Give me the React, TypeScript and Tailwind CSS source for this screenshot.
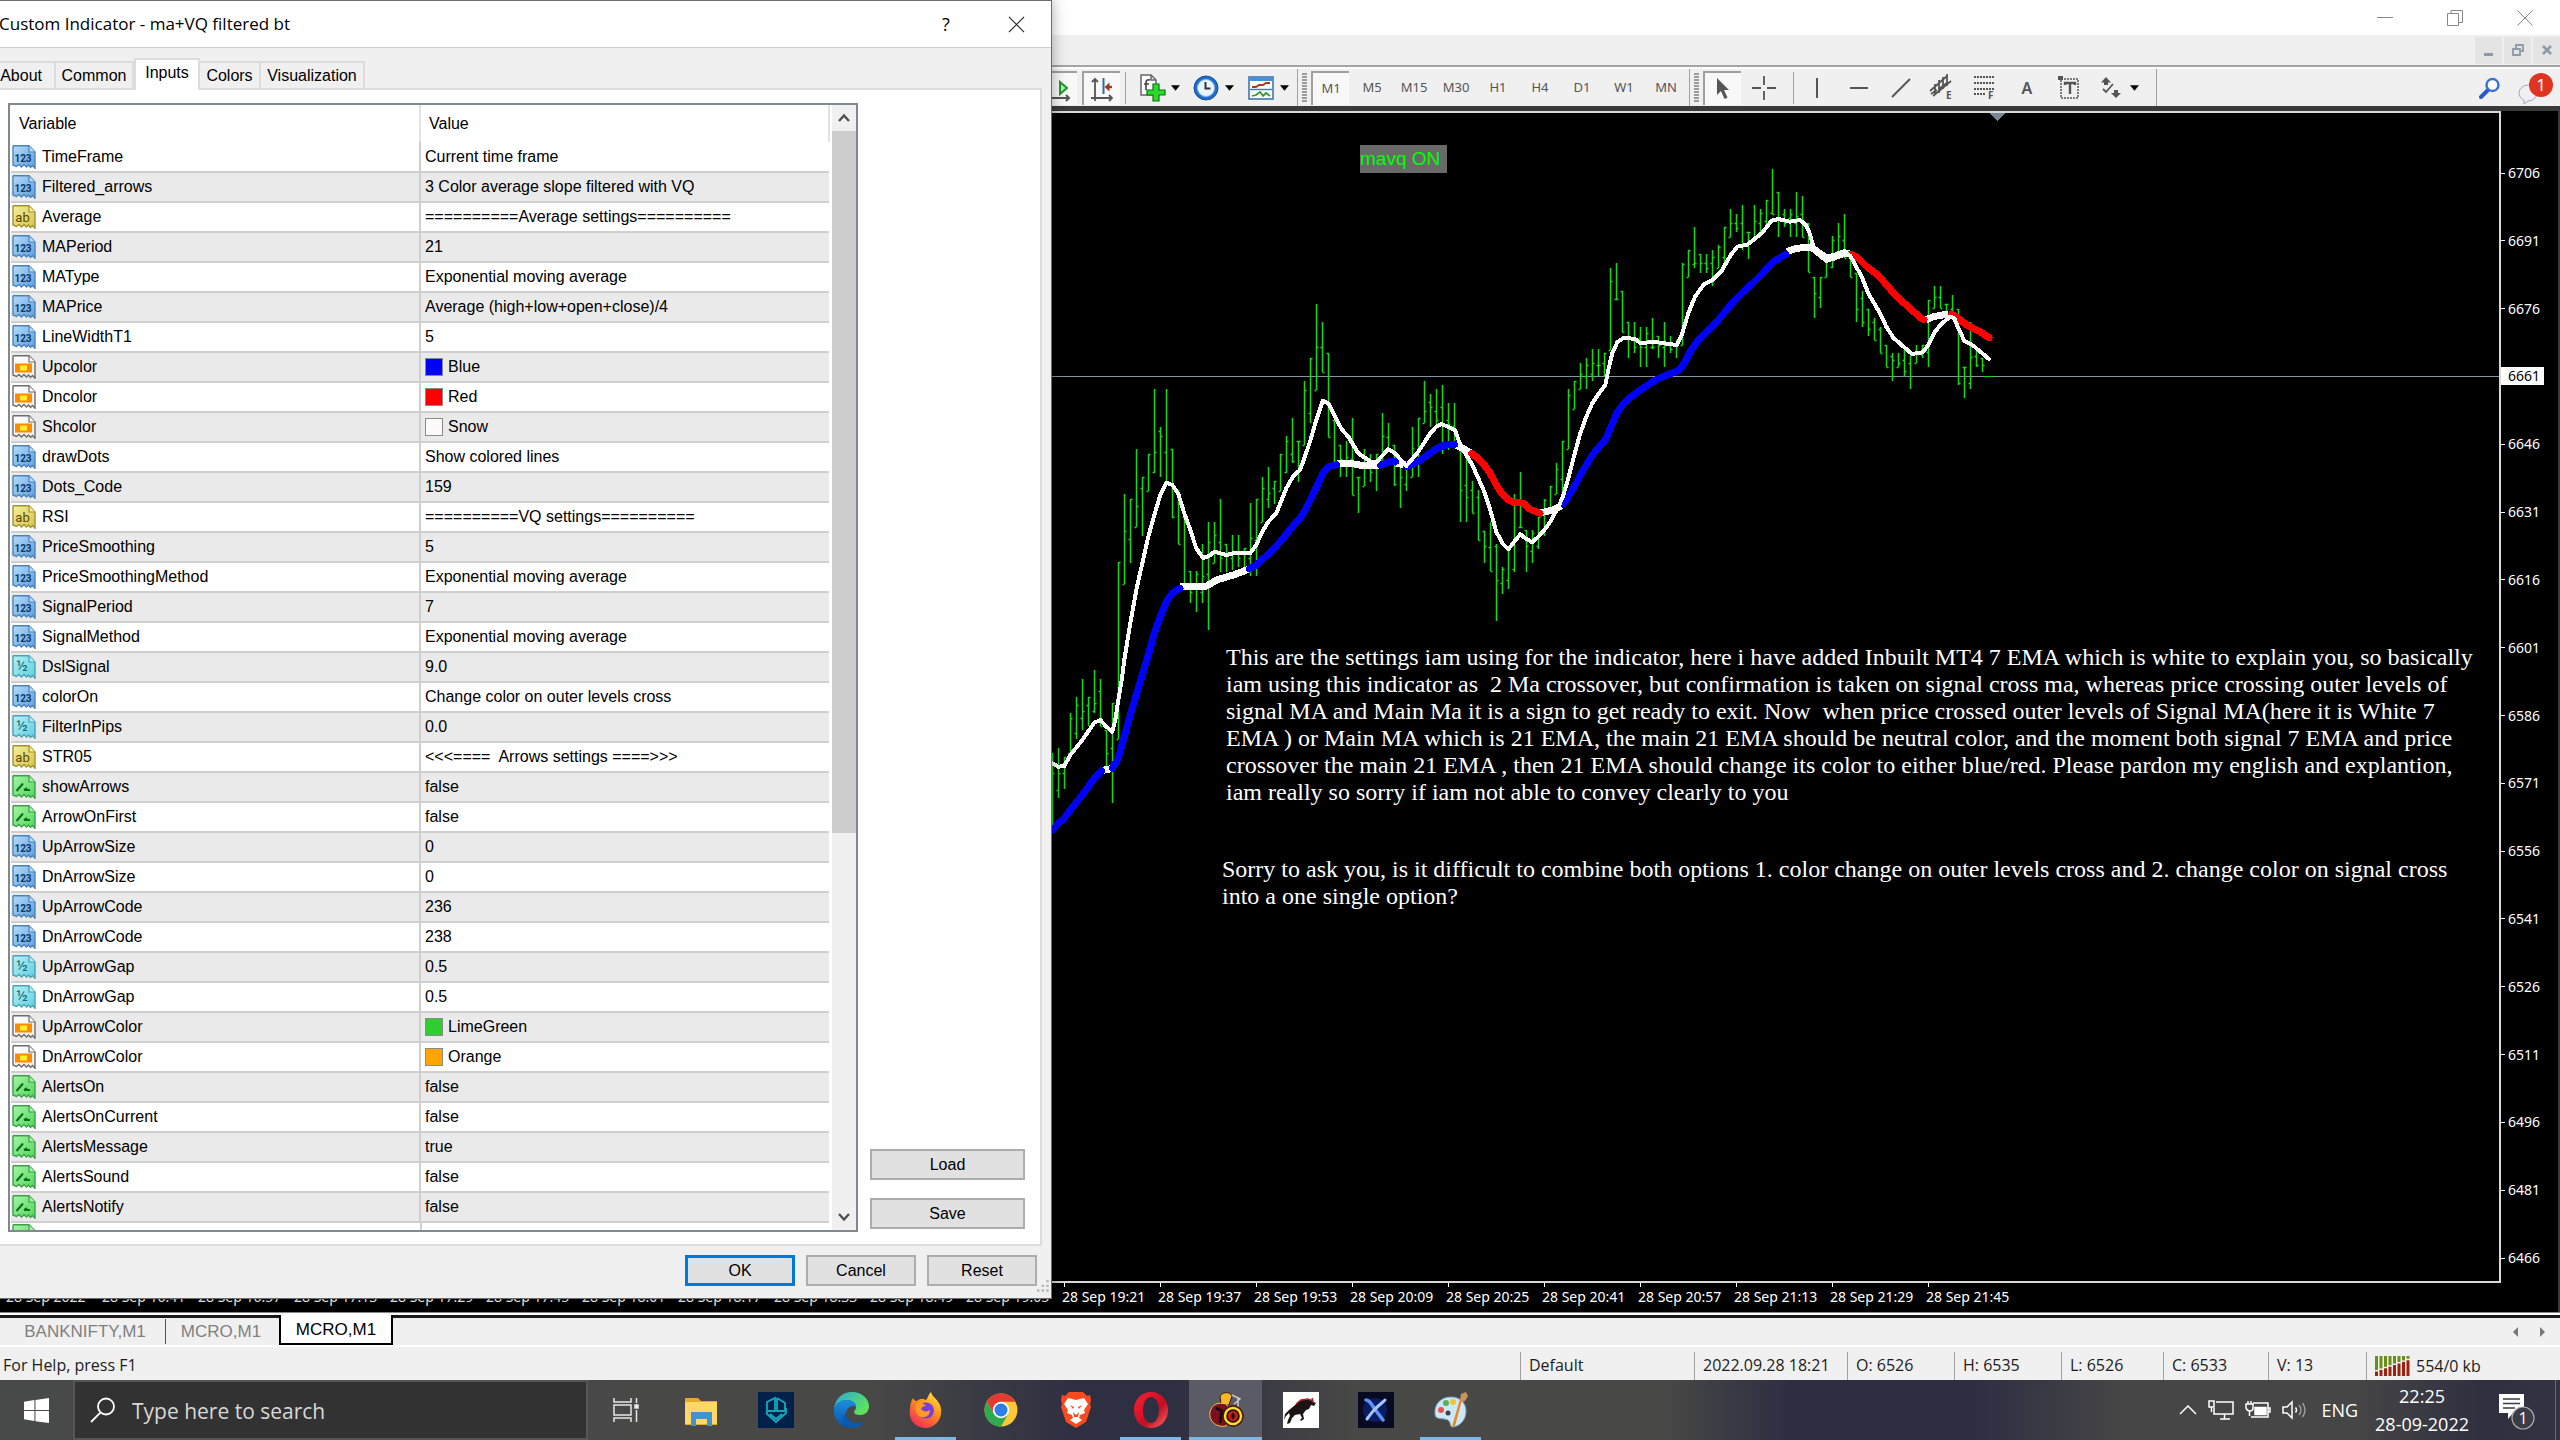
import React from "react";

/* ---------- chart data: y values in thirds of a pixel from each block's origin ---------- */

type Range = [number, number];
type Point = [number, number];

const EARLY_BARS: Range[] = [
  [1210, 1430], [1195, 1345], [1220, 1318], [1088, 1210], [1040, 1168], [987, 1140], [1040, 1128], [960, 1088],
  [987, 1128], [1140, 1250], [1060, 1358], [635, 1168], [433, 703], [447, 638], [298, 530], [380, 557],
  [312, 422], [118, 368], [232, 382], [118, 400], [298, 503], [420, 583], [500, 715], [663, 760],
  [663, 787], [583, 758], [515, 840], [515, 638], [447, 665], [583, 665], [556, 660], [556, 650],
  [595, 655], [460, 678], [447, 678], [380, 515], [352, 475], [393, 462], [312, 422], [258, 368],
  [204, 340], [272, 395], [92, 285], [24, 218], [-138, 119], [-85, 67], [9, 260], [210, 340],
  [285, 382], [272, 382], [204, 436], [380, 490], [298, 408], [312, 395], [312, 422], [190, 330],
  [218, 300], [285, 408], [330, 475], [340, 422], [232, 382], [204, 382], [92, 218], [132, 232],
  [118, 225], [105, 312], [158, 300], [158, 285], [290, 517], [320, 517], [393, 490], [420, 570],
  [543, 638], [515, 663], [583, 813],
];

const LATE_BARS: Range[] = [
  [1250, 1332], [1195, 1318], [1033, 1265], [967, 1130], [1140, 1265], [1140, 1238], [1100, 1197], [1047, 1157],
  [1007, 1090], [940, 1033], [872, 1040], [718, 898], [692, 778], [638, 718], [625, 718], [597, 692],
  [597, 678], [610, 680], [353, 600], [340, 448], [422, 545], [517, 625], [517, 610], [530, 652],
  [530, 652], [503, 597], [557, 625], [517, 652], [557, 610], [570, 625], [340, 585], [300, 382],
  [232, 355], [312, 368], [312, 368], [300, 408], [286, 355], [232, 350], [178, 260], [192, 247],
  [165, 300], [245, 328], [165, 270], [178, 245], [150, 230], [57, 192], [125, 260], [178, 232],
  [178, 260], [125, 260], [138, 260], [220, 367], [380, 503], [380, 475], [320, 382], [258, 355],
  [220, 320], [192, 325], [320, 380], [370, 517], [422, 530], [477, 557], [503, 570], [530, 610],
  [585, 652], [610, 692], [610, 650], [600, 678], [610, 718], [585, 638], [585, 625], [450, 652],
  [408, 475], [408, 475], [462, 490], [435, 490], [477, 705], [652, 745], [517, 718], [590, 652],
  [625, 665],
];

const early = (pts: Point[]): Point[] => pts.map(([x, y]) => [1050 + x / 3, 350 + y / 3]);
const late = (pts: Point[]): Point[] => pts.map(([x, y]) => [1500 + x / 3, 150 + y / 3]);

const BARS: Range[] = [
  ...EARLY_BARS.map(([h, l]): Range => [350 + h / 3, 350 + l / 3]),
  ...LATE_BARS.map(([h, l]): Range => [150 + h / 3, 150 + l / 3]),
];

const SIGNAL: Point[] = [
  ...early([
    [7, 1240], [25, 1250], [43, 1248], [61, 1215], [97, 1170], [133, 1118], [151, 1110], [169, 1130], [187, 1145],
    [196, 1110], [205, 1050], [215, 990], [223, 930], [241, 820], [259, 720], [277, 640], [295, 560], [313, 495],
    [331, 435], [349, 398], [367, 405], [385, 432], [403, 490], [421, 540], [439, 595], [459, 624], [477, 618],
    [493, 605], [529, 615], [550, 610], [601, 609], [619, 585], [637, 545], [655, 515], [679, 490], [709, 415],
    [730, 378], [750, 360], [763, 325], [781, 272], [799, 210], [818, 152], [835, 160], [853, 195], [875, 238],
    [895, 260], [925, 310], [962, 335], [980, 335], [1015, 298], [1033, 308], [1069, 348], [1105, 305], [1141, 250],
    [1159, 230], [1175, 222], [1215, 240], [1231, 285], [1249, 315], [1267, 345], [1285, 385], [1303, 425],
    [1321, 480], [1339, 545], [1357, 580],
  ]),
  ...late([
    [25, 1198], [43, 1175], [61, 1153], [79, 1167], [97, 1177], [115, 1160], [133, 1140], [151, 1115], [169, 1082],
    [187, 1045], [205, 985], [223, 915], [241, 850], [259, 800], [277, 760], [295, 733], [316, 705], [325, 660],
    [337, 610], [352, 577], [371, 563], [405, 567], [422, 580], [460, 575], [500, 581], [530, 585], [545, 555],
    [565, 490], [585, 440], [612, 403], [637, 390], [665, 362], [692, 315], [712, 290], [742, 284], [785, 250],
    [815, 212], [835, 207], [870, 215], [900, 210], [917, 225], [930, 252], [940, 290], [960, 305], [980, 318],
    [1000, 316], [1033, 303], [1051, 318], [1069, 350], [1087, 385], [1105, 430], [1140, 490], [1159, 530],
    [1180, 563], [1236, 612], [1268, 607], [1285, 585], [1303, 548], [1321, 525], [1350, 500], [1363, 505],
    [1375, 535], [1393, 572], [1420, 587], [1467, 627],
  ]),
];

const SNOW = "#fffafa";
const MAIN: { color: string; points: Point[] }[] = [
  { color: SNOW, points: early([[155, 1262], [187, 1255]]) },
  { color: SNOW, points: early([[390, 710], [466, 710], [500, 690], [550, 675], [598, 657]]) },
  { color: SNOW, points: early([[860, 340], [900, 340], [940, 347], [988, 346]]) },
  { color: SNOW, points: early([[1038, 340], [1066, 345]]) },
  { color: SNOW, points: early([[1219, 285], [1262, 308]]) },
  { color: SNOW, points: late([[122, 1088], [160, 1080], [184, 1068]]) },
  { color: SNOW, points: late([[862, 305], [885, 296], [915, 292], [938, 294], [960, 312], [980, 328], [1000, 322], [1033, 310], [1048, 312]]) },
  { color: SNOW, points: late([[1277, 510], [1300, 500], [1345, 492]]) },
  { color: "#0000ff", points: early([[7, 1440], [25, 1420], [43, 1405], [61, 1380], [97, 1335], [133, 1285], [155, 1262]]) },
  {
    color: "#0000ff",
    points: early([[187, 1255], [205, 1225], [223, 1160], [241, 1095], [259, 1035], [277, 975], [295, 915], [313, 850], [331, 800], [349, 755], [367, 730], [390, 715]]),
  },
  {
    color: "#0000ff",
    points: early([[598, 657], [619, 645], [655, 612], [691, 575], [727, 530], [750, 505], [763, 485], [781, 450], [799, 412], [820, 368], [835, 350], [860, 344]]),
  },
  { color: "#0000ff", points: early([[992, 346], [1015, 336], [1038, 334]]) },
  { color: "#0000ff", points: early([[1069, 348], [1090, 343], [1123, 322], [1159, 296], [1177, 287], [1217, 282]]) },
  {
    color: "#ff0000",
    points: early([[1265, 311], [1285, 325], [1303, 345], [1321, 370], [1339, 405], [1357, 432], [1375, 450], [1393, 458], [1403, 457], [1420, 460], [1440, 478], [1470, 490]]),
  },
  {
    color: "#0000ff",
    points: late([[190, 1062], [205, 1040], [223, 1010], [241, 975], [259, 945], [277, 915], [300, 888], [319, 865], [335, 825], [350, 790], [371, 760], [400, 735], [440, 707], [470, 688], [500, 675], [535, 662], [553, 640], [570, 605], [595, 570], [620, 545], [655, 510], [700, 455], [730, 425], [760, 398], [790, 368], [820, 335], [858, 313]]),
  },
  { color: "#ff0000", points: late([[1051, 313], [1075, 325], [1100, 350], [1130, 372], [1160, 405], [1190, 440], [1230, 475], [1260, 503], [1272, 509]]) },
  { color: "#ff0000", points: late([[1355, 492], [1375, 505], [1400, 525], [1440, 545], [1467, 563]]) },
];

const line = (pts: Point[]) => pts.map(([x, y]) => `${x.toFixed(1)},${y.toFixed(1)}`).join(" ");

const barPath = BARS.map(([h, l], i) => {
  const x = 1052.5 + i * 6;
  const prev = BARS[Math.max(0, i - 1)];
  const next = BARS[Math.min(BARS.length - 1, i + 1)];
  const clamp = (v: number) => Math.round(Math.min(l, Math.max(h, v))) + 0.5;
  const open = clamp((prev[0] + prev[1]) / 2);
  const close = clamp((next[0] + next[1]) / 2);
  return `M${x} ${h.toFixed(0)}V${l.toFixed(0)}M${x - 2} ${open}H${x}M${x} ${close}H${x + 2}`;
}).join("");

function Chart() {
  return (
    <svg className="absolute inset-0 h-full w-full" aria-label="MCRO,M1 price chart">
      <g transform="translate(0 -113)" fill="none" shapeRendering="crispEdges">
        <path d="M0 376.500H4000" stroke="#8595a4" />
        <path d={barPath} stroke="#10dd10" strokeWidth="1.500" shapeRendering="auto" />
        <path d="M1994 376.500h-10" stroke="#0ce00c" />
        {MAIN.map((s, i) => (
          <polyline
            key={i}
            points={line(s.points)}
            stroke={s.color}
            strokeWidth={7}
            strokeLinejoin="round"
            strokeLinecap={s.color === SNOW ? "butt" : "round"}
          />
        ))}
        <polyline points={line(SIGNAL)} stroke="#ffffff" strokeWidth={4} strokeLinejoin="round" strokeLinecap="round" />
        <path d="M1990 113h15l-7.500 8z" fill="#778899" />
      </g>
    </svg>
  );
}

/* ---------- indicator inputs ---------- */

type Kind = "int" | "str" | "dbl" | "bool" | "color";
type Input = { name: string; value: string; kind: Kind; swatch?: string };

const INPUTS: Input[] = [
  { name: "TimeFrame", value: "Current time frame", kind: "int" },
  { name: "Filtered_arrows", value: "3 Color average slope filtered with VQ", kind: "int" },
  { name: "Average", value: "==========Average settings==========", kind: "str" },
  { name: "MAPeriod", value: "21", kind: "int" },
  { name: "MAType", value: "Exponential moving average", kind: "int" },
  { name: "MAPrice", value: "Average (high+low+open+close)/4", kind: "int" },
  { name: "LineWidthT1", value: "5", kind: "int" },
  { name: "Upcolor", value: "Blue", kind: "color", swatch: "bg-[#0000ff]" },
  { name: "Dncolor", value: "Red", kind: "color", swatch: "bg-[#ff0000]" },
  { name: "Shcolor", value: "Snow", kind: "color", swatch: "bg-[#fffafa]" },
  { name: "drawDots", value: "Show colored lines", kind: "int" },
  { name: "Dots_Code", value: "159", kind: "int" },
  { name: "RSI", value: "==========VQ settings==========", kind: "str" },
  { name: "PriceSmoothing", value: "5", kind: "int" },
  { name: "PriceSmoothingMethod", value: "Exponential moving average", kind: "int" },
  { name: "SignalPeriod", value: "7", kind: "int" },
  { name: "SignalMethod", value: "Exponential moving average", kind: "int" },
  { name: "DslSignal", value: "9.0", kind: "dbl" },
  { name: "colorOn", value: "Change color on outer levels cross", kind: "int" },
  { name: "FilterInPips", value: "0.0", kind: "dbl" },
  { name: "STR05", value: "<<<====  Arrows settings ====>>>", kind: "str" },
  { name: "showArrows", value: "false", kind: "bool" },
  { name: "ArrowOnFirst", value: "false", kind: "bool" },
  { name: "UpArrowSize", value: "0", kind: "int" },
  { name: "DnArrowSize", value: "0", kind: "int" },
  { name: "UpArrowCode", value: "236", kind: "int" },
  { name: "DnArrowCode", value: "238", kind: "int" },
  { name: "UpArrowGap", value: "0.5", kind: "dbl" },
  { name: "DnArrowGap", value: "0.5", kind: "dbl" },
  { name: "UpArrowColor", value: "LimeGreen", kind: "color", swatch: "bg-[#32cd32]" },
  { name: "DnArrowColor", value: "Orange", kind: "color", swatch: "bg-[#ffa500]" },
  { name: "AlertsOn", value: "false", kind: "bool" },
  { name: "AlertsOnCurrent", value: "false", kind: "bool" },
  { name: "AlertsMessage", value: "true", kind: "bool" },
  { name: "AlertsSound", value: "false", kind: "bool" },
  { name: "AlertsNotify", value: "false", kind: "bool" },
];

const KIND_STYLE: Record<Kind, { light: string; dark: string; stroke: string }> = {
  int: { light: "#b4dbfb", dark: "#5f9fdc", stroke: "#4c84b8" },
  str: { light: "#f6ee9c", dark: "#d6c449", stroke: "#a2922f" },
  dbl: { light: "#b4f0f7", dark: "#5fcfde", stroke: "#47a3b3" },
  bool: { light: "#a5f5a5", dark: "#4fd65a", stroke: "#3c9f49" },
  color: { light: "#ffffff", dark: "#ececec", stroke: "#6d6d6d" },
};

function ParamIcon({ kind }: { kind: Kind }) {
  const s = KIND_STYLE[kind];
  const id = `param-${kind}`;
  return (
    <svg viewBox="0 0 24 24" className="size-6 shrink-0" aria-hidden="true">
      <defs>
        <linearGradient id={id} x1="0" y1="0" x2="1" y2="1">
          <stop offset="0" stopColor={s.light} />
          <stop offset="1" stopColor={s.dark} />
        </linearGradient>
      </defs>
      <path
        d="M1.500 .8H17L23 7V23.300L20.500 20.500L18.500 22.500L16.500 20L14.500 22L12 19.500L9.500 22L7 19.500L4.500 21.500L1 20V1.300Z"
        fill={`url(#${id})`}
        stroke={s.stroke}
        strokeWidth="1.400"
      />
      <path d="M17 1V7H23" fill={s.light} stroke={s.stroke} strokeWidth="1.200" />
      {kind === "int" && (
        <text x="11" y="16.500" fontSize="10" fontWeight="700" textAnchor="middle" fill="#0d3768" fontFamily="Roboto, sans-serif">123</text>
      )}
      {kind === "str" && (
        <text x="10.500" y="16.500" fontSize="13" textAnchor="middle" fill="#594a00" fontFamily="Roboto, sans-serif">ab</text>
      )}
      {kind === "dbl" && (
        <text x="10" y="16" fontSize="15" textAnchor="middle" fill="#0f6879" fontFamily="Roboto, sans-serif">½</text>
      )}
      {kind === "bool" && <path d="M4.500 16L11 8.500M12 15h6M12 15l3-2" stroke="#0c6b1b" strokeWidth="2" fill="none" />}
      {kind === "color" && (
        <>
          <rect x="3" y="8.500" width="17" height="9" fill="#ff8a00" />
          <rect x="8" y="10.500" width="7" height="5" fill="#ffee2b" />
        </>
      )}
    </svg>
  );
}

const DIALOG_TABS = [
  { label: "About", box: "w-[63px] pr-3 justify-end" },
  { label: "Common", box: "w-[78px] justify-center" },
  { label: "Inputs", box: "w-[66px] justify-center" },
  { label: "Colors", box: "w-[61px] justify-center" },
  { label: "Visualization", box: "w-[104px] justify-center" },
];

function Chevron({ up }: { up?: boolean }) {
  return (
    <svg viewBox="0 0 12 10" className="h-[10px] w-3" aria-hidden="true">
      <path d={up ? "M1 8L6 2.500L11 8" : "M1 2L6 7.500L11 2"} fill="none" stroke="#505050" strokeWidth="2.400" />
    </svg>
  );
}

function DialogButton({ label, wide, primary }: { label: string; wide?: boolean; primary?: boolean }) {
  return (
    <button
      type="button"
      className={
        "flex h-[31px] items-center justify-center bg-[#e1e1e1] text-base text-black " +
        (wide ? "w-[155px] " : "w-[110px] ") +
        (primary ? "border-3 border-[#0078d7]" : "border-2 border-[#adadad]")
      }
    >
      {label}
    </button>
  );
}

function IndicatorDialog() {
  return (
    <div
      role="dialog"
      aria-label="Custom Indicator - ma+VQ filtered bt"
      className="absolute top-0 -left-3 z-10 flex w-[1064px] flex-col border border-[#6c6c6c] bg-[#f0f0f0] font-['Liberation_Sans',Arial,sans-serif] text-base text-black shadow-[0_0_14px_rgba(0,0,0,0.35)]"
    >
      <div className="flex h-[47px] items-center border-b border-[#cfcfcf] bg-white pl-[10px] font-['Open_Sans',sans-serif] text-[17px]">
        <span className="flex-1">Custom Indicator - ma+VQ filtered bt</span>
        <button type="button" className="flex h-full w-[70px] items-center justify-center text-lg">?</button>
        <button type="button" aria-label="Close" className="flex h-full w-[70px] items-center justify-center">
          <svg viewBox="0 0 18 18" className="size-[17px]"><path d="M1 1L17 17M17 1L1 17" stroke="#222" strokeWidth="1.200" /></svg>
        </button>
      </div>

      <div role="tablist" className="flex h-10 items-end pl-1">
        {DIALOG_TABS.map((t) =>
          t.label === "Inputs" ? (
            <button key={t.label} role="tab" aria-selected="true" type="button" className={"relative z-10 -mb-[2px] flex h-8 items-center border-2 border-b-0 border-[#dcdcdc] bg-white pb-1 " + t.box}>
              {t.label}
            </button>
          ) : (
            <button key={t.label} role="tab" aria-selected="false" type="button" className={"flex h-[27px] items-center border-t-2 border-r-2 border-[#dcdcdc] bg-[#f0f0f0] " + t.box}>
              {t.label}
            </button>
          ),
        )}
      </div>

      <div className="mr-[9px] flex items-end gap-3 border-2 border-[#dcdcdc] bg-white pt-[13px] pr-[15px] pb-3 pl-[17px]">
        <div className="flex flex-1 border-2 border-[#828790] pl-px">
          <div className="flex-1">
            <table className="w-full table-fixed border-collapse">
              <colgroup>
                <col className="w-1/2" />
                <col className="w-1/2" />
              </colgroup>
              <thead>
                <tr className="h-[37px] text-left">
                  <th className="border-r-2 border-[#e2e2e2] pl-2 font-normal">Variable</th>
                  <th className="border-r-2 border-[#e2e2e2] pl-2 font-normal">Value</th>
                </tr>
              </thead>
              <tbody>
                {INPUTS.map((p) => (
                  <tr key={p.name} className="h-[30px] border-b-2 border-[#cfcfcf] even:bg-[#eaeaea]">
                    <td className="border-r-2 border-[#cfcfcf] p-0">
                      <div className="flex items-center gap-[6px] pl-px">
                        <ParamIcon kind={p.kind} />
                        {p.name}
                      </div>
                    </td>
                    <td className="p-0">
                      <div className="flex items-center gap-[5px] pl-1 whitespace-pre">
                        {p.swatch && <span className={"size-[18px] border border-[#8a8a8a] " + p.swatch} />}
                        {p.value}
                      </div>
                    </td>
                  </tr>
                ))}
              </tbody>
            </table>
            <div className="flex h-[7px] overflow-hidden">
              <div className="flex-1 border-r-2 border-[#cfcfcf] pt-px pl-px"><ParamIcon kind="bool" /></div>
              <div className="flex-1" />
            </div>
          </div>
          <div className="ml-[2px] flex w-6 flex-col items-center bg-[#f0f0f0]">
            <div className="flex h-[26px] items-center"><Chevron up /></div>
            <div className="h-[702px] w-full bg-[#cdcdcd]" />
            <div className="flex-1" />
            <div className="flex h-[26px] items-center"><Chevron /></div>
          </div>
        </div>
        <div className="mb-[3px] flex flex-col gap-[18px]">
          <DialogButton label="Load" wide />
          <DialogButton label="Save" wide />
        </div>
      </div>

      <div className="flex items-end justify-end pt-[9px] pb-3">
        <div className="flex gap-[11px]">
          <DialogButton label="OK" primary />
          <DialogButton label="Cancel" />
          <DialogButton label="Reset" />
        </div>
        <svg viewBox="0 0 12 12" className="-mb-2 size-[14px]" fill="#b5b5b5" aria-hidden="true">
          <path d="M8 0h2v2h-2zM8 4h2v2h-2zM4 4h2v2h-2zM8 8h2v2h-2zM4 8h2v2h-2zM0 8h2v2h-2z" />
        </svg>
      </div>
    </div>
  );
}

/* ---------- main window ---------- */

function Caret() {
  return <svg viewBox="0 0 10 6" className="h-[6px] w-[9px]" aria-hidden="true"><path d="M0 0H10L5 6Z" fill="#000" /></svg>;
}

function Grip() {
  return (
    <div className="mx-1 flex h-[30px] w-[5px] flex-col justify-between">
      {Array.from({ length: 10 }, (_, i) => <span key={i} className="h-[2px] bg-[#9b9b9b]" />)}
    </div>
  );
}

const PRESSED = "border-2 border-r-0 border-b-0 border-[#a0a0a0] bg-[#f8f8f8]";

function Tool({ label, pressed, children }: { label: string; pressed?: boolean; children: React.ReactNode }) {
  return (
    <button type="button" aria-label={label} className={"flex h-[34px] w-[38px] shrink-0 items-center justify-center " + (pressed ? PRESSED : "")}>
      {children}
    </button>
  );
}

const G = "#555555";

function Toolbar() {
  return (
    <div className="flex h-[39px] items-center border-t-2 border-white bg-[#f0f0f0] font-['Noto_Sans',sans-serif] text-[13px] text-[#555]">
      <div className="flex h-full flex-1 items-center">
        <div className="flex h-full w-[1298px] shrink-0 items-center justify-end border-r border-[#a0a0a0] pr-2">
          <div className="mr-[5px]">
            <Tool label="Auto scroll" pressed>
              <svg viewBox="0 0 24 26" className="h-[26px] w-6">
                <path d="M4 1v22M1 22h21M19 19l3 3-3 3" stroke={G} strokeWidth="2" fill="none" />
                <path d="M13 6l7 6-7 6z" fill="#b6e8b6" stroke="#1b9a2a" strokeWidth="2" />
              </svg>
            </Tool>
          </div>
          <Tool label="Chart shift" pressed>
            <svg viewBox="0 0 24 26" className="h-[26px] w-6">
              <path d="M5 3v22M1 22h21M2 6l3-3 3 3M19 19l3 3-3 3" stroke={G} strokeWidth="1.800" fill="none" />
              <path d="M13.500 2v16" stroke="#2d6da8" strokeWidth="2" />
              <path d="M22 11h-5" stroke="#a03a1b" strokeWidth="2.400" />
              <path d="M14.500 11l5-4.500v9z" fill="#a03a1b" />
            </svg>
          </Tool>
          <span className="mr-[13px] ml-[5px] h-8 w-px bg-[#a0a0a0]" />
          <button type="button" aria-label="Indicators" className="flex w-[54px] items-center gap-1">
            <svg viewBox="0 0 28 28" className="size-7">
              <path d="M2 1h10l5 5v15H2z" fill="#fff" stroke="#666" strokeWidth="1.500" />
              <path d="M12 1v5h5" fill="none" stroke="#666" strokeWidth="1.500" />
              <path d="M11 6c-3-1-4 1-4 3v7M5 10h5" fill="none" stroke="#444" strokeWidth="1.600" />
              <path d="M14 10h6v6h6v5h-6v6h-6v-6h-6v-5h6z" fill="#2fd82f" stroke="#067a06" strokeWidth="1.200" />
            </svg>
            <Caret />
          </button>
          <button type="button" aria-label="Periodicity" className="flex w-[55px] items-center gap-[6px]">
            <svg viewBox="0 0 26 26" className="size-[26px]">
              <circle cx="13" cy="13" r="12" fill="#1e6fd0" stroke="#164f96" />
              <circle cx="13" cy="13" r="8.500" fill="#eaf4fd" stroke="#8fc0ee" />
              <path d="M12.500 7v6.500h5" stroke="#333" strokeWidth="2" fill="none" />
            </svg>
            <Caret />
          </button>
          <button type="button" aria-label="Templates" className="flex w-[41px] items-center gap-[6px]">
            <svg viewBox="0 0 26 26" className="size-[26px]">
              <rect x="1" y="2" width="24" height="22" fill="#fff" stroke="#3c78b4" strokeWidth="1.600" />
              <rect x="1" y="2" width="24" height="4" fill="#4b8fd4" />
              <path d="M2 14.500h22" stroke="#3c78b4" strokeWidth="1.400" />
              <path d="M4 12h4l3-2h4l3-2h4" stroke="#b2361c" strokeWidth="1.800" fill="none" />
              <path d="M4 21l4-1 4-3 3 4 3-3 4 3" stroke="#2d9b2d" strokeWidth="1.800" fill="none" />
            </svg>
            <Caret />
          </button>
        </div>
        <Grip />
        <div className="flex h-full items-center gap-1 border-r border-[#a0a0a0] pr-1">
          {["M1", "M5", "M15", "M30", "H1", "H4", "D1", "W1", "MN"].map((t) => (
            <Tool key={t} label={t} pressed={t === "M1"}>{t}</Tool>
          ))}
        </div>
        <Grip />
        <div className="flex h-full items-center gap-1 border-r border-[#a0a0a0] pr-[10px]">
          <Tool label="Cursor" pressed>
            <svg viewBox="0 0 14 24" className="h-6 w-[14px]"><path d="M1 1V18L5 14L8.500 22L11.500 20.500L8 13H13Z" fill={G} /></svg>
          </Tool>
          <Tool label="Crosshair">
            <svg viewBox="0 0 24 24" className="size-6"><path d="M12 0v9M12 15v9M0 12h9M15 12h9" stroke={G} strokeWidth="1.800" /></svg>
          </Tool>
          <span className="ml-[6px] h-8 w-px bg-[#a0a0a0]" />
          <Tool label="Vertical line"><svg viewBox="0 0 20 20" className="size-5"><path d="M10 0v20" stroke={G} strokeWidth="2" /></svg></Tool>
          <Tool label="Horizontal line"><svg viewBox="0 0 20 20" className="size-5"><path d="M1 10h18" stroke={G} strokeWidth="2" /></svg></Tool>
          <Tool label="Trendline"><svg viewBox="0 0 20 20" className="size-5"><path d="M1 19L19 1" stroke={G} strokeWidth="2" /></svg></Tool>
          <Tool label="Equidistant channel">
            <svg viewBox="0 0 28 28" className="size-7">
              <path d="M1 17L18 2M4 22L22 7M6 10v10M10 6v13M14 3v12M18 0v12M2 20l6-4M10 15l9-7" stroke={G} strokeWidth="1.800" fill="none" />
              <text x="17" y="25" fontSize="10" fontWeight="700" fill={G}>E</text>
            </svg>
          </Tool>
          <Tool label="Fibonacci retracement">
            <svg viewBox="0 0 28 28" className="size-7">
              <path d="M3 3h21M3 9h21M3 15h21M3 20h12" stroke={G} strokeWidth="2" strokeDasharray="2 1" fill="none" />
              <text x="17" y="25" fontSize="10" fontWeight="700" fill={G}>F</text>
            </svg>
          </Tool>
          <Tool label="Text"><span className="text-base font-semibold">A</span></Tool>
          <Tool label="Text label">
            <svg viewBox="0 0 22 24" className="h-6 w-[22px]">
              <rect x="3" y="3" width="17" height="19" fill="none" stroke={G} strokeWidth="1.500" strokeDasharray="2 1" />
              <rect x="0" y="0" width="5" height="4" fill={G} />
              <path d="M7 9V7h10v2M12 7v11" stroke={G} strokeWidth="2.400" fill="none" />
            </svg>
          </Tool>
          <button type="button" aria-label="Arrows" className="ml-2 flex w-[46px] items-center gap-2">
            <svg viewBox="0 0 22 22" className="size-[22px]">
              <path d="M6 0l5 5.500H8V8H4V5.500H1ZM16 21l-5-5h3v-3h4v3h3Z" fill={G} />
              <path d="M3 12l3 3 7-8" stroke={G} strokeWidth="1.800" fill="none" />
            </svg>
            <Caret />
          </button>
        </div>
      </div>
      <button type="button" aria-label="Search" className="mr-1 flex w-11 items-center justify-center">
        <svg viewBox="0 0 22 22" className="size-[22px]">
          <path d="M2 20l7-7" stroke="#2a5cc4" strokeWidth="4" strokeLinecap="round" />
          <circle cx="13.500" cy="8" r="6" fill="#fff" stroke="#3970d8" strokeWidth="2.400" />
        </svg>
      </button>
      <button type="button" aria-label="Notifications" className="mr-[6px] flex items-center">
        <svg viewBox="0 0 38 34" className="h-[34px] w-[38px]">
          <path d="M3 22a9 8 0 1 1 9 8l-4 3v-4a9 8 0 0 1-5-7z" fill="#f0f0f4" stroke="#a6a6b4" />
          <circle cx="25" cy="14" r="12" fill="#df3420" />
          <text x="25" y="20" fontSize="17" textAnchor="middle" fill="#fff">1</text>
        </svg>
      </button>
    </div>
  );
}

const PRICES = [6706, 6691, 6676, 6661, 6646, 6631, 6616, 6601, 6586, 6571, 6556, 6541, 6526, 6511, 6496, 6481, 6466];
const TIMES = [
  "2022", "16:41", "16:57", "17:13", "17:29", "17:45", "18:01", "18:17", "18:33", "18:49", "19:05",
  "19:21", "19:37", "19:53", "20:09", "20:25", "20:41", "20:57", "21:13", "21:29", "21:45",
];

const NOTE_ONE = [
  "This are the settings iam using for the indicator, here i have added Inbuilt MT4 7 EMA which is white to explain you, so basically",
  "iam using this indicator as  2 Ma crossover, but confirmation is taken on signal cross ma, whereas price crossing outer levels of",
  "signal MA and Main Ma it is a sign to get ready to exit. Now  when price crossed outer levels of Signal MA(here it is White 7",
  "EMA ) or Main MA which is 21 EMA, the main 21 EMA should be neutral color, and the moment both signal 7 EMA and price",
  "crossover the main 21 EMA , then 21 EMA should change its color to either blue/red. Please pardon my english and explantion,",
  "iam really so sorry if iam not able to convey clearly to you",
];
const NOTE_TWO = [
  "Sorry to ask you, is it difficult to combine both options 1. color change on outer levels cross and 2. change color on signal cross",
  "into a one single option?",
];

function ChartWindow() {
  return (
    <div className="flex min-h-0 flex-1 flex-col border-t-[5px] border-r-2 border-[#3a3a3a] bg-black font-['Noto_Sans',sans-serif] text-sm text-white">
      <div className="flex min-h-0 flex-1">
        <div className="relative flex-1 overflow-hidden border-t-2 border-r-2 border-b-2 border-[#d8d8d8]">
          <Chart />
          <button type="button" className="absolute top-8 left-[1360px] h-7 w-[87px] bg-[#696969] text-left font-['Liberation_Sans',sans-serif] text-[19px] text-[#00ff00]">
            mavq ON
          </button>
          <div className="absolute top-[531px] left-[1222px] font-['Liberation_Serif','Times_New_Roman',serif] text-2xl leading-[27px] whitespace-pre">
            <div className="pl-1">{NOTE_ONE.map((l) => <p key={l} className="leading-[27px]">{l}</p>)}</div>
            <div className="pt-[50px]">{NOTE_TWO.map((l) => <p key={l} className="leading-[27px]">{l}</p>)}</div>
          </div>
        </div>
        <div className="flex w-[57px] flex-col justify-between pt-[52px] pb-[15px] leading-5">
          {PRICES.map((p) => (
            <div key={p} className="flex h-5 items-center">
              <span className="h-px w-1 bg-white" />
              {p === 6661 ? <span className="-ml-1 h-[18px] bg-white pr-1 pl-[7px] leading-[18px] text-black">{p}</span> : <span className="pl-[3px]">{p}</span>}
            </div>
          ))}
        </div>
      </div>
      <div className="flex h-[29px] shrink-0">
        {TIMES.map((t) => (
          <div key={t} className="flex w-24 shrink-0 flex-col pl-[6px] whitespace-nowrap">
            <span className="ml-[2px] h-1 w-px bg-white" />
            <span className="leading-5">28 Sep {t}</span>
          </div>
        ))}
      </div>
    </div>
  );
}

function SheetTabs() {
  return (
    <div className="flex h-8 items-start border-t-3 border-b-2 border-t-[#1a1a1a] border-b-white bg-[#f0f0f0] font-['Liberation_Sans',sans-serif] text-[17px] text-[#808080]">
      <div role="tablist" className="flex flex-1 items-start">
        <button role="tab" aria-selected="false" type="button" className="mt-px h-[25px] w-[166px] border-r border-[#555] pl-[5px] leading-[25px]">BANKNIFTY,M1</button>
        <button role="tab" aria-selected="false" type="button" className="mt-px h-[25px] w-[113px] pr-[3px] leading-[25px]">MCRO,M1</button>
        <button role="tab" aria-selected="true" type="button" className="-mt-[3px] h-[30px] w-[114px] border-2 border-t-0 border-black bg-white pt-[2px] text-black">MCRO,M1</button>
      </div>
      <div className="flex h-full items-center gap-[22px] pr-[14px]">
        <button type="button" aria-label="Scroll left"><svg viewBox="0 0 6 10" className="h-[10px] w-[6px]"><path d="M6 0v10L1 5z" fill="#777" /></svg></button>
        <button type="button" aria-label="Scroll right"><svg viewBox="0 0 6 10" className="h-[10px] w-[6px]"><path d="M0 0v10l5-5z" fill="#777" /></svg></button>
      </div>
    </div>
  );
}

const STATUS = [
  { text: "Default", w: "w-[174px]" },
  { text: "2022.09.28 18:21", w: "w-[153px]" },
  { text: "O: 6526", w: "w-[107px]" },
  { text: "H: 6535", w: "w-[107px]" },
  { text: "L: 6526", w: "w-[102px]" },
  { text: "C: 6533", w: "w-[105px]" },
  { text: "V: 13", w: "w-[98px]" },
];

function StatusBar() {
  return (
    <div className="flex h-[33px] items-end bg-[#f0f0f0] font-['Open_Sans',sans-serif] text-base text-[#1c1c1c]">
      <span className="h-[28px] flex-1 pl-[3px] leading-[27px]">For Help, press F1</span>
      {STATUS.map((s) => (
        <span key={s.text} className={"h-[28px] border-l border-[#a0a0a0] pl-2 leading-[27px] whitespace-nowrap " + s.w}>{s.text}</span>
      ))}
      <span className="flex h-[28px] w-[194px] items-center gap-[6px] border-l border-[#a0a0a0] pl-2">
        <svg viewBox="0 0 35 20" className="h-5 w-[35px]" aria-hidden="true">
          {Array.from({ length: 8 }, (_, i) => (
            <g key={i}>
              <rect x={i * 4.5} y="0" width="3" height={14 - i * 1.6} fill="#6b8e1a" />
              <rect x={i * 4.5} y={15.5 - i * 1.6} width="3" height={4.5 + i * 1.6} fill="#9b2210" />
            </g>
          ))}
        </svg>
        <span>554/0 kb</span>
      </span>
    </div>
  );
}

/* ---------- taskbar ---------- */

const APPS: { name: string; state?: "open" | "active"; icon: React.ReactNode }[] = [
  {
    name: "File Explorer",
    icon: (
      <>
        <path d="M2 6h13l3 3h16v24H2z" fill="#e9a924" />
        <path d="M2 10h32v22H2z" fill="#ffd869" />
        <path d="M8 20h21v14h-5v-7H13v7H8z" fill="#3f94d6" />
      </>
    ),
  },
  {
    name: "PG",
    icon: (
      <>
        <rect width="36" height="36" fill="#02214a" />
        <path d="M9 21V10l8-4v13H9M19 6l8 5v8h-8V6M8 21l10 9 10-9v-5M12 22l6 5 6-5" fill="none" stroke="#16a7b8" strokeWidth="1.800" />
      </>
    ),
  },
  {
    name: "Microsoft Edge",
    icon: (
      <>
        <defs>
          <linearGradient id="edge-a" x1="0" y1="0" x2="1" y2="0.600"><stop offset="0" stopColor="#2aa9e0" /><stop offset="1" stopColor="#5fe35a" /></linearGradient>
          <linearGradient id="edge-b" x1="0" y1="0" x2="0" y2="1"><stop offset="0" stopColor="#1b8fe0" /><stop offset="1" stopColor="#0a4fa8" /></linearGradient>
        </defs>
        <path d="M1 17C2 7 9 0 19 0c10 0 17 7 17 14 0 6-4 9-9 9-4 0-6-1-6-3 0-1 2-2 2-5 0-4-4-7-9-7C8 8 3 11 1 17z" fill="url(#edge-a)" />
        <path d="M1 17c2-6 7-9 13-9 5 0 9 3 9 7-2-2-9-1-10 6-1 8 8 13 18 9-3 4-8 6-13 6C8 36 0 28 1 17z" fill="url(#edge-b)" />
        <path d="M13 21c1 8 9 12 18 9-4 5-9 6-13 6-9-3-10-12-5-15z" fill="#0b5aa9" />
      </>
    ),
  },
  {
    name: "Firefox",
    state: "open",
    icon: (
      <>
        <defs>
          <linearGradient id="fox" x1="0.800" y1="0" x2="0.200" y2="1"><stop offset="0" stopColor="#ffe53b" /><stop offset="0.450" stopColor="#ff8a1f" /><stop offset="1" stopColor="#f0265e" /></linearGradient>
        </defs>
        <path d="M5 6c1 2 2 3 4 3 3-3 7-2 9-1 2-2 2-5 5-8 1 5 6 6 9 13 4 10-2 22-14 23C7 36 0 27 2 17c0-4 1-8 3-11z" fill="url(#fox)" />
        <circle cx="18" cy="18.500" r="8" fill="#7b3fd8" />
        <path d="M8 12c4-2 8-1 10 2-3 0-4 1-5 3 2 3 7 3 9 1 0 5-4 8-8 7-5-1-8-7-6-13z" fill="#ff9a28" />
      </>
    ),
  },
  {
    name: "Google Chrome",
    icon: (
      <>
        <circle cx="18" cy="18" r="16.500" fill="#fcc934" />
        <path d="M3.700 9.800A16.500 16.500 0 0 1 32.300 9.800H18L10.900 22.100Z" fill="#e33b2e" />
        <path d="M3.700 9.800A16.500 16.500 0 0 0 18 34.500L25.100 22.100L18 26L10.900 22.100Z" fill="#2da94f" />
        <circle cx="18" cy="18" r="8.200" fill="#fff" />
        <circle cx="18" cy="18" r="6.500" fill="#2f7de9" />
      </>
    ),
  },
  {
    name: "Brave",
    icon: (
      <>
        <path d="M11 0h14l4 4 3-1 1 5-1 4 1 3-5 15-10 6-10-6L3 15l1-3-1-4 1-5 3 1z" fill="#fb4a1d" />
        <path d="M10 6l8 2 8-2 4 6-4 6 1 3-5 2-1 3 3 2-6 4-6-4 3-2-1-3-5-2 1-3-4-6z" fill="#fff" />
        <path d="M12 13l4 2-1 2zM24 13l-4 2 1 2zM15 20l3 3 3-3-1 5h-4z" fill="#fb4a1d" />
      </>
    ),
  },
  {
    name: "Opera",
    state: "open",
    icon: (
      <>
        <defs><linearGradient id="opera" x1="0" y1="0" x2="1" y2="1"><stop offset="0" stopColor="#ff1f35" /><stop offset="0.600" stopColor="#c40d24" /><stop offset="1" stopColor="#ff6a6a" /></linearGradient></defs>
        <path fillRule="evenodd" d="M18 0C8 0 1 8 1 18s7 18 17 18 17-8 17-18S28 0 18 0zM18 5c5 0 8 6 8 13s-3 13-8 13-8-6-8-13 3-13 8-13z" fill="url(#opera)" />
      </>
    ),
  },
  {
    name: "MetaTrader",
    state: "active",
    icon: (
      <>
        <path d="M12 4c4-5 10-4 12 0l-3 9h-8z" fill="#f3b824" stroke="#3a1a08" />
        <path d="M24 3l8 4-6 5M30 5v12" fill="none" stroke="#c8c8c8" strokeWidth="1.500" />
        <path d="M2 20c2-8 8-10 16-8l6 8-6 14c-8 2-18-4-16-14z" fill="#7a1021" stroke="#f3c04a" />
        <path d="M8 16l6 3-2 12" fill="none" stroke="#1b0b0b" strokeWidth="3" />
        <circle cx="25" cy="24" r="10" fill="#f9dc2c" stroke="#4a1508" strokeWidth="1.500" />
        <circle cx="25" cy="24" r="6" fill="#c31a1a" stroke="#1a0a0a" strokeWidth="1.500" />
        <path d="M25 20l2 4-2 4-2-4z" fill="#111" />
      </>
    ),
  },
  {
    name: "Bull",
    icon: (
      <>
        <rect width="36" height="36" fill="#fff" />
        <path d="M33 11l-2 3-3-1-2 4-3 1-3 4 1 5-3 2-1-1 2-2-2-4-5 1-3 3-2 5-3 1 1-4 2-4-1-3-3 3-2 4 1-6 4-4 5-4 5-5 7-2 5 1 2 2z" fill="#1c1414" />
        <path d="M13 12l5-4 7-1 5 2-1-3" fill="none" stroke="#b3202a" strokeWidth="1.400" />
      </>
    ),
  },
  {
    name: "X",
    icon: (
      <>
        <rect width="36" height="36" fill="#070a20" />
        <circle cx="17" cy="18" r="12" fill="#0c1c63" />
        <path d="M8 8c3 0 5 3 8 8l9 12" fill="none" stroke="#5b93ff" strokeWidth="3.500" strokeLinecap="round" />
        <path d="M27 8c-3 3-7 6-10 9s-5 6-8 10" fill="none" stroke="#a5c8ff" strokeWidth="3" strokeLinecap="round" />
      </>
    ),
  },
  {
    name: "Paint",
    state: "open",
    icon: (
      <>
        <path d="M2 22C1 12 8 5 18 5c9 0 15 6 15 14 0 9-6 15-13 16-3 0-2-3-4-6-3-4-14 0-14-7z" fill="#cfe6f5" stroke="#7aa7c4" />
        <circle cx="8" cy="18" r="3" fill="#e5564a" />
        <circle cx="13" cy="11" r="3" fill="#58b05b" />
        <circle cx="20" cy="10" r="3" fill="#f1c33a" />
        <circle cx="15" cy="21" r="2.500" fill="#37434d" />
        <path d="M29 8l-7 26-3 1 1-4 7-24z" fill="#e08a2b" />
        <path d="M27 8l1-6 5-2 2 4-3 5-3 1z" fill="#c99558" />
      </>
    ),
  },
];

function Taskbar() {
  return (
    <div className="flex h-[60px] items-stretch bg-[linear-gradient(90deg,#484a4a_0%,#484847_34%,#2f2f42_42%,#2f2f42_46%,#484846_53%,#484846_65%,#2d2e42_70%,#2d2e42_77%,#464646_83%,#464646_92%,#2f2f40_97%,#333343_100%)] font-['Open_Sans',sans-serif] text-lg text-white">
      <button type="button" aria-label="Start" className="flex w-[73px] items-center justify-center">
        <svg viewBox="0 0 24 24" className="size-[25px]" fill="#fff"><path d="M0 3.500L10 2v9.500H0zM11 1.800L24 0v11.500H11zM0 12.500h10V22L0 20.500zM11 12.500h13V24L11 22.200z" /></svg>
      </button>
      <label className="flex w-[515px] items-center gap-4 border-2 border-[#565656] bg-[#323232] pl-[15px]">
        <svg viewBox="0 0 26 26" className="size-[26px] shrink-0"><circle cx="16" cy="9.500" r="8" fill="none" stroke="#fff" strokeWidth="1.800" /><path d="M10.500 15.500L1 25" stroke="#fff" strokeWidth="1.800" /></svg>
        <input aria-label="Search" placeholder="Type here to search" className="w-full bg-transparent pt-[3px] text-[21px] placeholder-[#d8d8d8] outline-none" />
      </label>
      <button type="button" aria-label="Task View" className="flex w-[76px] items-center justify-center">
        <svg viewBox="0 0 26 24" className="h-6 w-[26px]" fill="none" stroke="#e6e6e6" strokeWidth="1.500">
          <path d="M1 0v4h17V0M1 24v-4h17v4M1 7h17v10H1zM23.500 0v5M23.500 12v12" />
          <path d="M22 7h3v3h-3z" fill="#fff" />
        </svg>
      </button>
      <div className="flex flex-1 gap-[2px]">
        {APPS.map((a) => (
          <button
            key={a.name}
            type="button"
            aria-label={a.name}
            className={"flex w-[73px] flex-col items-center justify-between pt-3 " + (a.state === "active" ? "bg-[#5b5b66]" : "")}
          >
            <svg viewBox="0 0 36 36" className="size-9">{a.icon}</svg>
            <span className={"h-[3px] " + (a.state === "active" ? "w-full bg-[#76b9ed]" : a.state === "open" ? "w-[61px] bg-[#76b9ed]" : "w-0")} />
          </button>
        ))}
      </div>
      <div className="flex items-center gap-[11px] pr-1">
        <svg viewBox="0 0 18 10" className="h-[10px] w-[18px]"><path d="M1 9l8-8 8 8" fill="none" stroke="#fff" strokeWidth="1.500" /></svg>
        <svg viewBox="0 0 26 20" className="h-5 w-[26px]" fill="none" stroke="#fff" strokeWidth="1.500"><path d="M8 2h17v12H6V8M1 1h5v6H1zM3.500 7v5M12 19h10M16.500 14v5" /></svg>
        <svg viewBox="0 0 26 20" className="h-5 w-[26px]" fill="none" stroke="#fff" strokeWidth="1.500"><path d="M8 3h15v14H6M23 8h2v4h-2M1 4h7v4q0 3-3 3t-4-3zM3 1v3M6 1v3M4.500 11v5" /><path d="M10 7.500h11v7H10z" fill="#fff" /></svg>
        <svg viewBox="0 0 24 20" className="h-5 w-6" fill="none" stroke="#fff" strokeWidth="1.500"><path d="M1 7h4l5-5v16l-5-5H1zM13.500 7.500q2 2.500 0 5" /><path d="M17 5q4 5 0 10M20.500 3q5 7 0 14" stroke="#9a9a9a" /></svg>
        <span className="pl-1">ENG</span>
        <div className="ml-[6px] flex flex-col text-center leading-7">
          <span>22:25</span>
          <span>28-09-2022</span>
        </div>
        <svg viewBox="0 0 38 42" className="mr-2 ml-[18px] h-[42px] w-[38px]" aria-label="Notifications">
          <path d="M1 5h25v19H15l-5 6v-6H1z" fill="#fff" />
          <path d="M5 10h17M5 14.500h17M5 19h12" stroke="#3a3a44" strokeWidth="1.500" />
          <circle cx="25" cy="29" r="11" fill="#3c3c47" stroke="#aaa" strokeWidth="1.200" />
          <text x="25" y="35" fontSize="16" textAnchor="middle" fill="#fff">1</text>
        </svg>
        <span className="h-full w-px bg-[#6b6b75]" />
      </div>
    </div>
  );
}

export default function App() {
  return (
    <div className="relative flex h-screen flex-col overflow-hidden bg-white">
      <div className="flex h-[35px] items-center justify-end bg-white">
        <button type="button" aria-label="Minimize" className="flex h-full w-[70px] items-center justify-center"><span className="h-px w-4 bg-[#888]" /></button>
        <button type="button" aria-label="Restore" className="flex h-full w-[70px] items-center justify-center">
          <svg viewBox="0 0 16 16" className="size-4"><path d="M.5 3.500h11v12H.5zM4 3.500v-3h11.500v12H12" fill="none" stroke="#888" /></svg>
        </button>
        <button type="button" aria-label="Close" className="flex h-full w-[70px] items-center justify-center">
          <svg viewBox="0 0 16 16" className="size-4"><path d="M.5.5l15 15M15.500.5l-15 15" stroke="#888" /></svg>
        </button>
      </div>
      <div className="flex h-[32px] items-center justify-end gap-[2px] border-b-2 border-[#a5a5a5] bg-[#f0f0f0]">
        <button type="button" aria-label="Minimize chart" className="flex h-[27px] w-[27px] items-center justify-center bg-[#e4e4e4]"><span className="mt-2 h-[3px] w-[9px] bg-[#8d9aa8]" /></button>
        <button type="button" aria-label="Restore chart" className="flex h-[27px] w-[27px] items-center justify-center bg-[#e4e4e4]">
          <svg viewBox="0 0 12 12" className="size-3"><path d="M1 5h7v6H1zM4 4V1h7v6H9" fill="none" stroke="#8d9aa8" strokeWidth="1.800" /></svg>
        </button>
        <button type="button" aria-label="Close chart" className="flex h-[27px] w-[27px] items-center justify-center bg-[#e4e4e4]">
          <svg viewBox="0 0 10 10" className="size-[10px]"><path d="M1 1l8 8M9 1L1 9" stroke="#8d9aa8" strokeWidth="2.600" /></svg>
        </button>
      </div>
      <Toolbar />
      <ChartWindow />
      <div className="h-[3px] shrink-0 border-t border-[#888] bg-white" />
      <SheetTabs />
      <StatusBar />
      <Taskbar />
      <IndicatorDialog />
    </div>
  );
}
